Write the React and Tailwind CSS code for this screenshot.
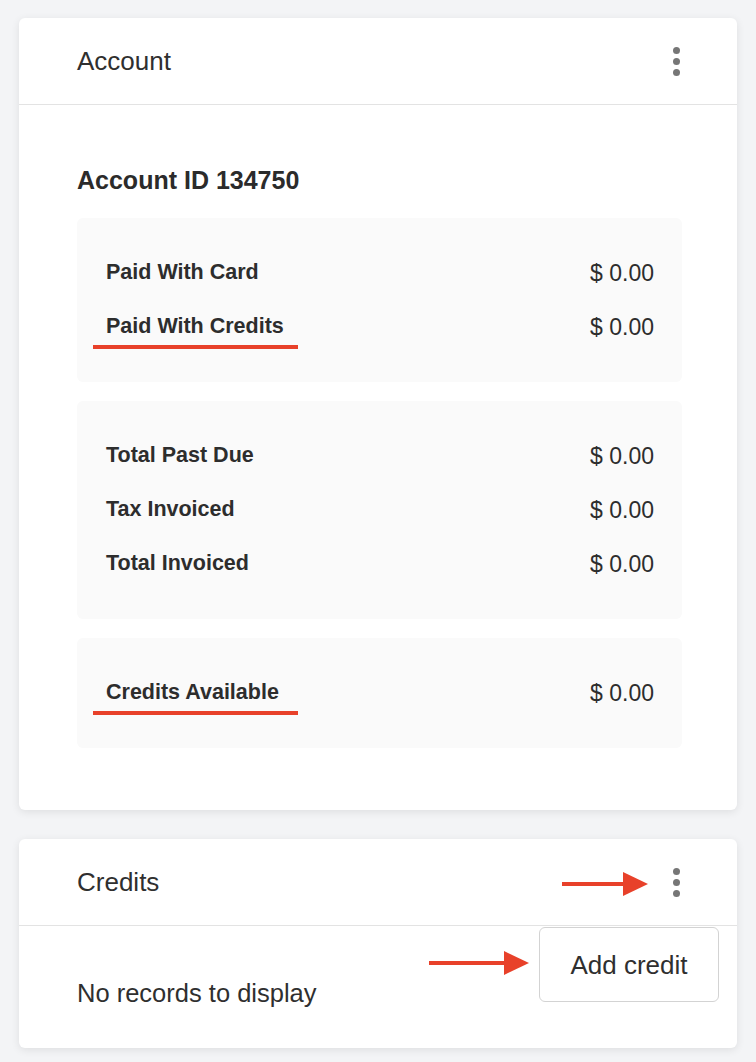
import React from "react";

const RED = "bg-[#e8412a]";

function Kebab() {
  return (
    <div className="flex flex-col items-center gap-[4px]">
      <span className="block h-[7px] w-[7px] rounded-full bg-[#767676]" />
      <span className="block h-[7px] w-[7px] rounded-full bg-[#767676]" />
      <span className="block h-[7px] w-[7px] rounded-full bg-[#767676]" />
    </div>
  );
}

function Arrow({ width }) {
  return (
    <svg width={width} height="24" viewBox={`0 0 ${width} 24`}>
      <rect x="0" y="10" width={width - 23} height="4" fill="#e8412a" />
      <polygon points={`${width - 25},0 ${width},12 ${width - 25},24`} fill="#e8412a" />
    </svg>
  );
}

function Row({ label, value, mark }) {
  return (
    <div className="relative flex h-[54px] items-center justify-between">
      <span className="text-[21.5px] font-bold text-[#2d2d2d]">{label}</span>
      <span className="text-[23px] text-[#2d2d2d]">{value}</span>
      {mark && (
        <span className={`absolute left-[-13px] top-[45px] h-[4px] w-[205px] ${RED}`} />
      )}
    </div>
  );
}

function Panel({ children }) {
  return (
    <div className="rounded-[6px] bg-[#fafafa] py-[28px] pl-[29px] pr-[28px]">
      {children}
    </div>
  );
}

function CardHeader({ title }) {
  return (
    <div className="flex h-[87px] items-center justify-between border-b border-[#e3e3e3] pl-[58px] pr-[57px]">
      <span className="text-[26px] text-[#2f2f2f]">{title}</span>
      <Kebab />
    </div>
  );
}

export default function App() {
  return (
    <div className="min-h-screen bg-[#f3f4f6] px-[19px] pt-[18px] pb-[14px] font-['Liberation_Sans',Arial,sans-serif] leading-none">
      {/* Account card */}
      <div className="rounded-[6px] bg-white shadow-[0_2px_8px_rgba(0,0,0,0.09)]">
        <CardHeader title="Account" />
        <div className="pl-[58px] pr-[55px] pt-[60px] pb-[62px]">
          <h2 className="h-[30px] text-[25px] font-bold leading-[30px] text-[#2b2b2b]">
            Account ID 134750
          </h2>
          <div className="mt-[23px] flex flex-col gap-[19px]">
            <Panel>
              <Row label="Paid With Card" value="$ 0.00" />
              <Row label="Paid With Credits" value="$ 0.00" mark />
            </Panel>
            <Panel>
              <Row label="Total Past Due" value="$ 0.00" />
              <Row label="Tax Invoiced" value="$ 0.00" />
              <Row label="Total Invoiced" value="$ 0.00" />
            </Panel>
            <Panel>
              <Row label="Credits Available" value="$ 0.00" mark />
            </Panel>
          </div>
        </div>
      </div>

      {/* Credits card */}
      <div className="relative mt-[29px] rounded-[6px] bg-white shadow-[0_2px_8px_rgba(0,0,0,0.09)]">
        <CardHeader title="Credits" />
        <div className="pl-[58px] pt-[52px] pb-[40px]">
          <p className="h-[30px] text-[25.5px] leading-[30px] text-[#2f2f2f]">No records to display</p>
        </div>

        {/* open menu */}
        <div className="absolute right-[18px] top-[88px] flex h-[75px] w-[180px] items-center justify-center rounded-[6px] border border-[#d3d3d3] bg-white">
          <span className="text-[26px] text-[#2f2f2f]">Add credit</span>
        </div>

        {/* annotation arrows */}
        <div className="absolute left-[543px] top-[33px]">
          <Arrow width={86} />
        </div>
        <div className="absolute left-[410px] top-[112px]">
          <Arrow width={100} />
        </div>
      </div>
    </div>
  );
}
